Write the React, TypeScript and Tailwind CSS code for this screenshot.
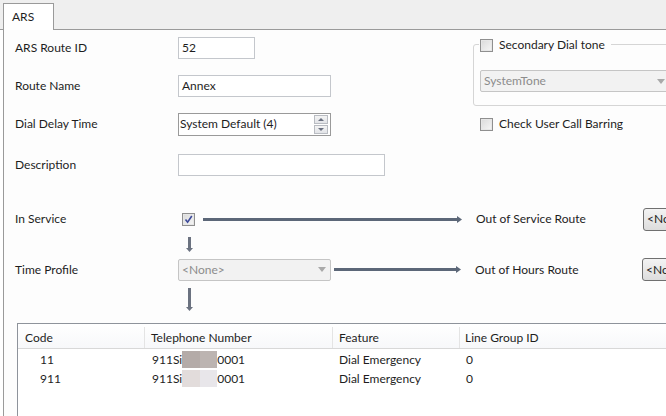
import React from "react";

const font = { fontFamily: "Lato, 'Noto Sans', sans-serif" };

function Input({ w, value }: { w: string; value?: string }) {
  return (
    <div className={`${w} h-[22px] shrink-0 border border-[#c4c7cc] bg-white flex items-center px-[3px] text-[12px] text-[#1e1e1e]`}>
      {value}
    </div>
  );
}

function Combo({ w, value }: { w: string; value: string }) {
  return (
    <div className={`${w} h-[22px] shrink-0 border border-[#c5c5c5] rounded-[2px] bg-[#f2f2f2] flex items-center pl-[3px] pr-[4px] text-[12px] text-[#8c8c8c]`}>
      <span className="flex-1">{value}</span>
      <svg width="8" height="5" viewBox="0 0 8 5"><path d="M0 0H8L4 5Z" fill="#a9a9a9" /></svg>
    </div>
  );
}

function Check({ checked }: { checked?: boolean }) {
  return (
    <div className="w-[13px] h-[13px] shrink-0 border border-[#8f8f8f] bg-[#e6e6e6] flex items-center justify-center p-[1px]">
      <div className="w-full h-full bg-gradient-to-br from-[#dcdcdc] to-[#f4f4f4] flex items-center justify-center">
        {checked && (
          <svg width="9" height="9" viewBox="0 0 9 9"><path d="M1.5 4.5L3.6 7.2L7.8 1" stroke="#3d4a9a" strokeWidth="1.6" fill="none" /></svg>
        )}
      </div>
    </div>
  );
}

function HArrow({ w }: { w: string }) {
  return (
    <div className={`${w} shrink-0 flex items-center`}>
      <div className="flex-1 h-[3px] bg-[#5c6778]" />
      <svg width="5" height="7" viewBox="0 0 5 7"><path d="M0 0L5 3.5L0 7Z" fill="#5c6778" /></svg>
    </div>
  );
}

function VArrow({ h }: { h: string }) {
  return (
    <div className={`${h} w-[7px] flex flex-col items-center`}>
      <div className="flex-1 w-[3px] bg-[#6b7280]" />
      <svg width="7" height="4" viewBox="0 0 7 4"><path d="M0 0H7L3.5 4Z" fill="#6b7280" /></svg>
    </div>
  );
}

function NoneButton() {
  return (
    <div className="w-[40px] h-[23px] shrink-0 border border-[#707070] rounded-[3px] bg-gradient-to-b from-[#f3f3f3] to-[#dddddd] flex items-center pl-[3px] text-[12px] text-[#1e1e1e] whitespace-nowrap overflow-hidden">
      &lt;None&gt;
    </div>
  );
}

export default function App() {
  return (
    <div className="w-[666px] h-[416px] overflow-hidden bg-white text-[12px] text-[#1e1e1e] flex flex-col" style={font}>
      {/* tab strip */}
      <div className="h-[30px] bg-[#efefef] flex items-end shrink-0">
        <div className="w-[3px] h-full border-b border-[#9a9a9a]" />
        <div className="w-[51px] h-[27px] bg-white border border-b-0 border-[#9a9a9a] pl-[8px] pt-[4px] text-[12px]">ARS</div>
        <div className="flex-1 h-full border-b border-[#9a9a9a]" />
      </div>
      {/* panel */}
      <div className="flex-1 ml-[3px] border-l border-[#9a9a9a] bg-[#fdfdfd] flex flex-col overflow-hidden">
        <div className="flex">
          {/* left form */}
          <div className="w-[469px] shrink-0 pl-[11px] pt-[7px] flex flex-col">
            <div className="flex items-center h-[22px]">
              <span className="w-[163px] shrink-0">ARS Route ID</span>
              <Input w="w-[77px]" value="52" />
            </div>
            <div className="flex items-center h-[22px] mt-[16px]">
              <span className="w-[163px] shrink-0">Route Name</span>
              <Input w="w-[153px]" value="Annex" />
            </div>
            <div className="flex items-center h-[22px] mt-[16px]">
              <span className="w-[163px] shrink-0">Dial Delay Time</span>
              <div className="w-[153px] h-[23px] shrink-0 border border-[#9a9a9a] bg-white flex items-center pl-[1px] pr-[1px]">
                <span className="flex-1">System Default (4)</span>
                <div className="w-[14px] h-[19px] flex flex-col gap-[1px] mr-[1px]">
                  <div className="flex-1 border border-[#b9bcc2] bg-gradient-to-b from-[#f4f4f4] to-[#e2e4e8] flex items-center justify-center">
                    <svg width="6" height="3" viewBox="0 0 6 3"><path d="M0 3H6L3 0Z" fill="#6a7080" /></svg>
                  </div>
                  <div className="flex-1 border border-[#b9bcc2] bg-gradient-to-b from-[#f4f4f4] to-[#e2e4e8] flex items-center justify-center">
                    <svg width="6" height="3" viewBox="0 0 6 3"><path d="M0 0H6L3 3Z" fill="#6a7080" /></svg>
                  </div>
                </div>
              </div>
            </div>
            <div className="flex items-center h-[22px] mt-[19px]">
              <span className="w-[163px] shrink-0">Description</span>
              <Input w="w-[207px]" />
            </div>
          </div>
          {/* right column */}
          <div className="w-[220px] shrink-0 pt-[8px] flex flex-col">
            <div className="relative border border-[#d5d5d5] rounded-[3px] mt-[6px] h-[62px] w-[220px] pl-[6px] pt-[25px]">
              <div className="absolute left-[5px] top-[-9px] bg-[#fdfdfd] flex items-center gap-[6px] pr-[6px] pl-[1px]">
                <Check />
                <span>Secondary Dial tone</span>
              </div>
              <Combo w="w-[190px]" value="SystemTone" />
            </div>
            <div className="flex items-center gap-[6px] ml-[7px] mt-[9px]">
              <Check />
              <span>Check User Call Barring</span>
            </div>
          </div>
        </div>

        {/* In Service row */}
        <div className="flex items-center mt-[31px] pl-[11px] h-[24px]">
          <span className="w-[167px] shrink-0">In Service</span>
          <Check checked />
          <div className="w-[8px] shrink-0" />
          <HArrow w="w-[259px]" />
          <span className="ml-[14px] w-[167px] shrink-0">Out of Service Route</span>
          <NoneButton />
        </div>
        <div className="pl-[182px] mt-[6px]">
          <VArrow h="h-[15px]" />
        </div>
        <div className="flex items-center mt-[6px] pl-[11px] h-[23px]">
          <span className="w-[163px] shrink-0">Time Profile</span>
          <Combo w="w-[153px]" value="<None>" />
          <div className="w-[3px] shrink-0" />
          <HArrow w="w-[127px]" />
          <span className="ml-[14px] w-[167px] shrink-0">Out of Hours Route</span>
          <NoneButton />
        </div>
        <div className="pl-[182px] mt-[7px]">
          <VArrow h="h-[23px]" />
        </div>

        {/* table */}
        <div className="ml-[13px] mt-[12px] flex-1 border-t border-l border-[#8e939b] bg-white flex flex-col">
          <div className="h-[25px] flex items-center border-b border-[#d8d8d8] bg-gradient-to-b from-white to-[#f7f8fa] pt-[3px]">
            <div className="w-[127px] pl-[7px] h-full flex items-center border-r border-[#e4e4e4]">Code</div>
            <div className="w-[188px] pl-[6px] h-full flex items-center border-r border-[#e4e4e4]">Telephone Number</div>
            <div className="w-[127px] pl-[6px] h-full flex items-center border-r border-[#e4e4e4]">Feature</div>
            <div className="flex-1 pl-[5px] h-full flex items-center">Line Group ID</div>
          </div>
          {[
            { code: "11", a: "bg-[#b4aba8]", b: "bg-[#bcb4b1]" },
            { code: "911", a: "bg-[#e2dcdb]", b: "bg-[#e8e6ea]" },
          ].map((r, i) => (
            <div key={i} className={`flex items-center h-[17px] ${i === 0 ? "mt-[2px]" : "mt-[2px]"}`}>
              <div className="w-[128px] pl-[22px]">{r.code}</div>
              <div className="w-[188px] pl-[6px] flex items-center h-full">
                <span className="shrink-0 whitespace-nowrap">911Si</span>
                <div className={`w-[18px] h-[17px] shrink-0 ${r.a}`} />
                <div className={`w-[17px] h-[17px] shrink-0 ${r.b}`} />
                <span>0001</span>
              </div>
              <div className="w-[127px] pl-[5px]">Dial Emergency</div>
              <div className="flex-1 pl-[5px]">0</div>
            </div>
          ))}
        </div>
      </div>
    </div>
  );
}
